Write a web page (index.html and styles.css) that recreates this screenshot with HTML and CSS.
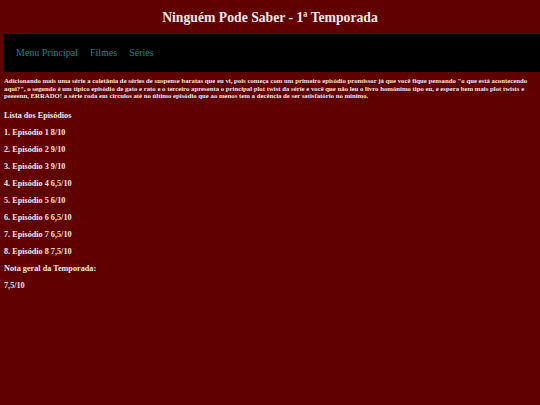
FILE: index.html
```html
<!DOCTYPE html>
<html lang="pt-BR">
<head>
<meta charset="utf-8">
<title>Ninguém Pode Saber - 1ª Temporada</title>
<link rel="stylesheet" href="styles.css">
</head>
<body>
<h1 class="title">Ninguém Pode Saber - 1ª Temporada</h1>
<nav class="menu">
  <a href="#">Menu Principal</a>
  <a href="#">Filmes</a>
  <a href="#">Séries</a>
</nav>
<main class="content">
  <p class="desc">Adicionando mais uma série a coletânia de séries de suspense baratas que eu vi, pois começa com um primeiro episódio promissor já que você fique pensando "o que está acontecendo aqui?", o segundo é um típico episódio de gato e rato e o terceiro apresenta o principal plot twist da série e você que não leu o livro homônimo tipo eu, e espera bem mais plot twists e peeeenn, ERRADO! a série roda em circulos até no último episódio que ao menos tem a decência de ser satisfatório no mínimo.</p>
  <p class="item">Lista dos Episódios</p>
  <p class="item">1. Episódio 1 8/10</p>
  <p class="item">2. Episódio 2 9/10</p>
  <p class="item">3. Episódio 3 9/10</p>
  <p class="item">4. Episódio 4 6,5/10</p>
  <p class="item">5. Episódio 5 6/10</p>
  <p class="item">6. Episódio 6 6,5/10</p>
  <p class="item">7. Episódio 7 6,5/10</p>
  <p class="item">8. Episódio 8 7,5/10</p>
  <p class="item">Nota geral da Temporada:</p>
  <p class="item">7,5/10</p>
</main>
</body>
</html>
```
FILE: styles.css
```css
html, body {
  margin: 0;
  padding: 0;
  background: #610000;
}
body {
  font-family: "Liberation Serif", "Times New Roman", serif;
  color: #efe8e8;
}
.title {
  font-size: 13.7px;
  line-height: 15px;
  text-align: center;
  margin: 0 0 9px 0;
  padding-top: 10px;
  font-weight: bold;
}
.menu {
  margin-left: 3px;
  background: #000;
  display: flex;
  gap: 12px;
  padding: 13px 13px;
  font-size: 10px;
  line-height: 12px;
}
.menu a {
  color: #158585;
  text-decoration: none;
}
.content {
  padding-left: 4px;
  font-weight: bold;
}
.desc {
  font-size: 6.75px;
  line-height: 7.5px;
  margin: 5px 4px 11px 0;
}
.item {
  font-size: 8.2px;
  line-height: 9.1px;
  margin: 8px 0;
}
```
